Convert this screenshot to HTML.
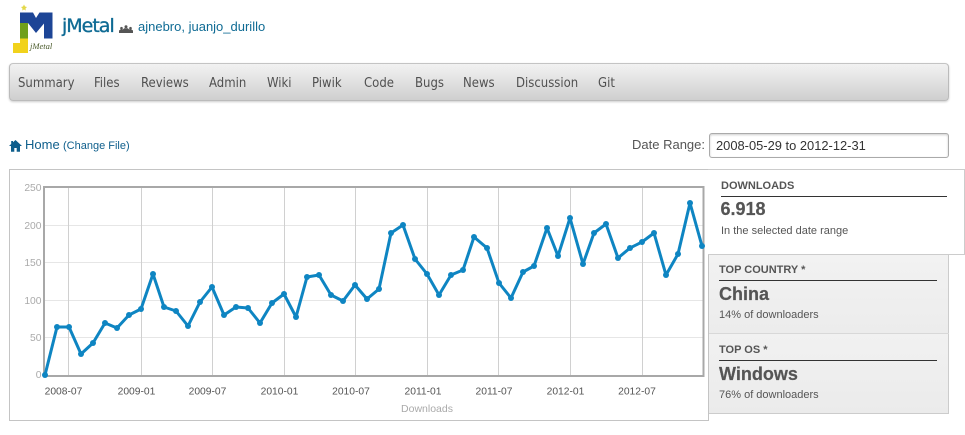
<!DOCTYPE html>
<html><head><meta charset="utf-8"><style>
html,body{margin:0;padding:0;background:#fff}
body{width:965px;height:435px;overflow:hidden;position:relative;font-family:"Liberation Sans",sans-serif;color:#555}
.a{position:absolute;white-space:nowrap}
.nav{left:9px;top:63px;width:938px;height:36px;border:1px solid #bbb;border-top:1px solid #c4c4c4;border-radius:4px;background:linear-gradient(#f2f2f2,#cfcfcf);box-shadow:0 1px 2px rgba(0,0,0,.2)}
.n{top:76px;font:13px/16px "DejaVu Sans",sans-serif;font-stretch:condensed;color:#505050}
.h{font-weight:bold;font-size:11px;line-height:13px;color:#555}
.v{font-weight:bold;font-size:18px;line-height:22px;color:#555;-webkit-text-stroke:.2px #555}
.s{font-size:11px;line-height:13px;color:#555}
.r{background:#333;height:1px}
</style></head><body>

<svg class="a" style="left:0;top:0" width="60" height="58" viewBox="0 0 60 58">
<path d="M24 4.500l1 2 2 .5-1.500 1.500.3 2-1.800-1-1.800 1 .3-2L21 7l2-.5z" fill="#e3d84a"/>
<path d="M20 12.500H33L36 18 39.500 12.500H52.500V38.500H44V23.500L36 33 28 23H20z" fill="#1d4596"/>
<path d="M20 23H28V38.500H20z" fill="#6f9f1c"/>
<path d="M20 38.500H28V53H13V43H20z" fill="#f1d21c"/>
<text x="30" y="49" font-family="Liberation Serif,serif" font-style="italic" font-size="8.500" fill="#4a5a2a">jMetal</text>
</svg>

<div class="a" style="left:62px;top:15px;font:19px/22px 'DejaVu Sans',sans-serif;color:#0f6b94;letter-spacing:-1px;-webkit-text-stroke:.35px #0f6b94">jMetal</div>
<svg class="a" style="left:119px;top:25px" width="14" height="8" viewBox="0 0 14 8"><g fill="#555"><circle cx="2.500" cy="3.200" r="1.300"/><circle cx="7" cy="1.800" r="1.500"/><circle cx="11.500" cy="3.200" r="1.300"/><path d="M0 8V5.500L1.500 4.500H3.500L4.500 4 5 3.300H9L9.500 4 10.500 4.500H12.500L14 5.500V8z"/></g></svg>
<div class="a" style="left:138px;top:19px;font-size:13px;line-height:16px;color:#0f6b94">ajnebro, juanjo_durillo</div>

<div class="a nav"></div>
<div class="a n" style="left:18px">Summary</div>
<div class="a n" style="left:94px">Files</div>
<div class="a n" style="left:141px">Reviews</div>
<div class="a n" style="left:209px">Admin</div>
<div class="a n" style="left:267px">Wiki</div>
<div class="a n" style="left:312px">Piwik</div>
<div class="a n" style="left:364px">Code</div>
<div class="a n" style="left:415px">Bugs</div>
<div class="a n" style="left:463px">News</div>
<div class="a n" style="left:516px">Discussion</div>
<div class="a n" style="left:598px">Git</div>

<svg class="a" style="left:9px;top:139px" width="13" height="13" viewBox="0 0 13 13"><path d="M6.500 1L13 7H11V12.700H7.700V9H5.300V12.700H2V7H0L2.200 5V2H4V3.300z" fill="#0e5e8c"/></svg>
<div class="a" style="left:25px;top:137px;font-size:13px;line-height:16px;color:#0f5f8c">Home</div>
<div class="a" style="left:63px;top:139px;font-size:11px;line-height:14px;color:#0f5f8c">(Change File)</div>

<div class="a" style="left:632px;top:137px;font-size:13px;line-height:16px;color:#555">Date Range:</div>
<div class="a" style="left:709px;top:133px;width:232px;height:23px;border:1px solid #aaa;border-radius:3px;box-shadow:inset 0 1px 2px rgba(0,0,0,.2);padding-left:6px;font-size:12.900px;line-height:23px;color:#333;background:#fff">2008-05-29 to 2012-12-31</div>

<div class="a" style="left:708px;top:253px;width:240px;height:159px;border:1px solid #ccc;border-left:none;background:linear-gradient(#f2f2f2 0,#ececec 50%,#f1f1f1 50.500%,#ebebeb 100%)"></div>
<div class="a" style="left:708px;top:333px;width:241px;height:1px;background:#d8d8d8"></div>
<div class="a" style="left:9px;top:169px;width:698px;height:250px;border:1px solid #c4c4c4;background:#fff"></div>
<div class="a" style="left:708px;top:169px;width:256px;height:84px;border:1px solid #ccc;border-left:none;background:#fff"></div>

<svg class="a" style="left:0;top:0" width="965" height="435" viewBox="0 0 965 435">
<g stroke="#e6e6e6" stroke-width="1">
<path d="M44 225.500H703M44 262.500H703M44 300.500H703M44 337.500H703"/>
</g>
<g stroke="#d0d0d0" stroke-width="1">
<path d="M68.500 187V375M141.500 187V375M212.500 187V375M284.500 187V375M355.500 187V375M427.500 187V375M498.500 187V375M570.500 187V375M642.500 187V375"/>
</g>
<rect x="44" y="187" width="659.500" height="189" fill="none" stroke="#a8a8a8" stroke-width="2"/>
<polyline fill="none" stroke="#0e85c2" stroke-width="3" stroke-linejoin="round" points="45,375 57,327 69,327 81,354 93,343 105,323 117,328 129,315 141,309 153,274 164,307 176,311 188,326 200,302 212,287 224,315 236,307 248,308 260,323 272,303 284,294 296,317 307,277 319,275 331,295 343,301 355,285 367,299 379,289 391,233 403,225 415,259 427,274 439,295 451,275 463,270 474,237 487,248 499,283 511,298 523,272 534,266 547,228 558,256 570,218 583,264 594,233 606,224 618,258 630,248 642,242 654,233 666,275 678,254 690,203 702,246"/>
<g fill="#0e85c2">
<circle cx="45" cy="375" r="3"/><circle cx="57" cy="327" r="3"/><circle cx="69" cy="327" r="3"/><circle cx="81" cy="354" r="3"/><circle cx="93" cy="343" r="3"/><circle cx="105" cy="323" r="3"/><circle cx="117" cy="328" r="3"/><circle cx="129" cy="315" r="3"/><circle cx="141" cy="309" r="3"/><circle cx="153" cy="274" r="3"/><circle cx="164" cy="307" r="3"/><circle cx="176" cy="311" r="3"/><circle cx="188" cy="326" r="3"/><circle cx="200" cy="302" r="3"/><circle cx="212" cy="287" r="3"/><circle cx="224" cy="315" r="3"/><circle cx="236" cy="307" r="3"/><circle cx="248" cy="308" r="3"/><circle cx="260" cy="323" r="3"/><circle cx="272" cy="303" r="3"/><circle cx="284" cy="294" r="3"/><circle cx="296" cy="317" r="3"/><circle cx="307" cy="277" r="3"/><circle cx="319" cy="275" r="3"/><circle cx="331" cy="295" r="3"/><circle cx="343" cy="301" r="3"/><circle cx="355" cy="285" r="3"/><circle cx="367" cy="299" r="3"/><circle cx="379" cy="289" r="3"/><circle cx="391" cy="233" r="3"/><circle cx="403" cy="225" r="3"/><circle cx="415" cy="259" r="3"/><circle cx="427" cy="274" r="3"/><circle cx="439" cy="295" r="3"/><circle cx="451" cy="275" r="3"/><circle cx="463" cy="270" r="3"/><circle cx="474" cy="237" r="3"/><circle cx="487" cy="248" r="3"/><circle cx="499" cy="283" r="3"/><circle cx="511" cy="298" r="3"/><circle cx="523" cy="272" r="3"/><circle cx="534" cy="266" r="3"/><circle cx="547" cy="228" r="3"/><circle cx="558" cy="256" r="3"/><circle cx="570" cy="218" r="3"/><circle cx="583" cy="264" r="3"/><circle cx="594" cy="233" r="3"/><circle cx="606" cy="224" r="3"/><circle cx="618" cy="258" r="3"/><circle cx="630" cy="248" r="3"/><circle cx="642" cy="242" r="3"/><circle cx="654" cy="233" r="3"/><circle cx="666" cy="275" r="3"/><circle cx="678" cy="254" r="3"/><circle cx="690" cy="203" r="3"/><circle cx="702" cy="246" r="3"/>
</g>
<g font-family="Liberation Sans,sans-serif" font-size="10.300" fill="#aaa" text-anchor="end">
<text x="41.500" y="191">250</text><text x="41.500" y="229">200</text><text x="41.500" y="266">150</text><text x="41.500" y="304">100</text><text x="41.500" y="341">50</text><text x="41.500" y="378">0</text>
</g>
<g font-family="Liberation Sans,sans-serif" font-size="10.300" fill="#555" text-anchor="middle">
<text x="63.500" y="394.500">2008-07</text><text x="136.500" y="394.500">2009-01</text><text x="207.500" y="394.500">2009-07</text><text x="279.500" y="394.500">2010-01</text><text x="351" y="394.500">2010-07</text><text x="423" y="394.500">2011-01</text><text x="494" y="394.500">2011-07</text><text x="565.500" y="394.500">2012-01</text><text x="637" y="394.500">2012-07</text>
</g>
<text x="427" y="412" font-family="Liberation Sans,sans-serif" font-size="10.500" fill="#aaa" text-anchor="middle">Downloads</text>
</svg>

<div class="a h" style="left:721px;top:180px">DOWNLOADS</div>
<div class="a r" style="left:721px;top:196px;width:226px"></div>
<div class="a v" style="left:720.500px;top:198px">6.918</div>
<div class="a s" style="left:721px;top:225px">In the selected date range</div>

<div class="a h" style="left:719px;top:264px">TOP COUNTRY *</div>
<div class="a r" style="left:719px;top:280px;width:218px"></div>
<div class="a v" style="left:719px;top:283px">China</div>
<div class="a s" style="left:719px;top:309px">14% of downloaders</div>

<div class="a h" style="left:719px;top:344px">TOP OS *</div>
<div class="a r" style="left:719px;top:360px;width:218px"></div>
<div class="a v" style="left:719px;top:363px">Windows</div>
<div class="a s" style="left:719px;top:389px">76% of downloaders</div>

</body></html>
